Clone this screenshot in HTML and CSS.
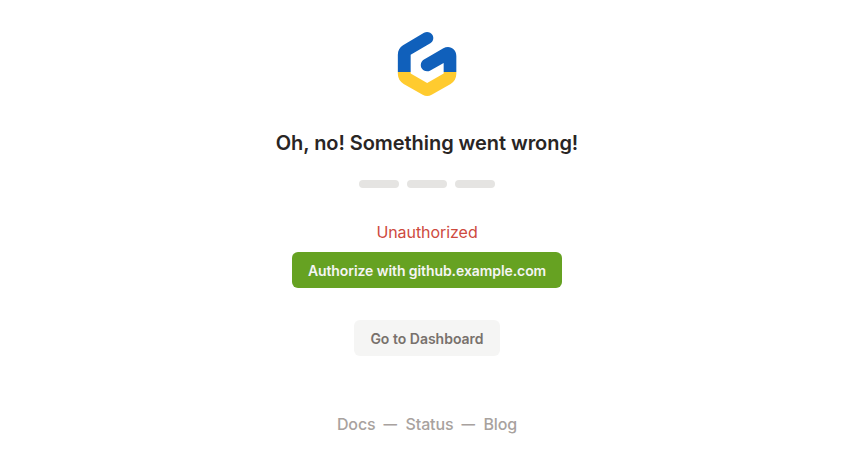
FILE: index.html
```html
<!DOCTYPE html>
<html lang="en">
<head>
<meta charset="utf-8">
<title>Oh, no! Something went wrong!</title>
<link rel="stylesheet" href="styles.css">
</head>
<body>
<main class="page">
  <svg class="logo" viewBox="0 0 240 240" aria-hidden="true">
    <defs>
      <linearGradient id="flag" gradientUnits="userSpaceOnUse" x1="0" y1="0" x2="0" y2="240">
        <stop offset="0.6" stop-color="#1060bb"/>
        <stop offset="0.6" stop-color="#ffcb2f"/>
      </linearGradient>
    </defs>
    <path fill="url(#flag)" d="M111 26.5C120 21.500 131 24.500 136.500 33C141.500 42 138.500 53 130 58L71 92V148.500L120.500 177L170 148.500V117L130 139.500C121 144.500 109 142 104 133C99 124 101.500 112 111 106.500L169 73C187 62.500 208 74 208 96V149C208 162 202 173 191 180L134 212.500C125 217.500 116 217.500 107 212.500L50 180C39 173 32.500 162 32.500 149V92C32.500 80 38 70 48 64Z"/>
  </svg>
  <h1 class="title">Oh, no! Something went wrong!</h1>
  <div class="bars"><span></span><span></span><span></span></div>
  <p class="error">Unauthorized</p>
  <button class="button primary">Authorize with github.example.com</button>
  <button class="button secondary">Go to Dashboard</button>
  <footer class="links"><span>Docs</span><span class="dash">—</span><span>Status</span><span class="dash">—</span><span>Blog</span></footer>
</main>
</body>
</html>
```
FILE: styles.css
```css
* { box-sizing: border-box; }
body {
  margin: 0;
  background: #fff;
  font-family: Inter, "Liberation Sans", sans-serif;
}
.page {
  display: flex;
  flex-direction: column;
  align-items: center;
  height: 463px;
  padding: 24px 0 0 4px;
}
.logo { width: 80px; height: 80px; flex: none; }
.title {
  margin: 25px 0 0;
  font-size: 20px;
  line-height: 28px;
  font-weight: 600;
  letter-spacing: -0.06px;
  color: #292524;
}
.bars { display: flex; gap: 8px; margin-top: 23px; }
.bars span { width: 40px; height: 8px; border-radius: 4px; background: #e5e4e2; }
.error {
  margin: 32px 0 0;
  font-size: 16px;
  line-height: 24px;
  letter-spacing: -0.06px;
  color: #ce4a3e;
}
.button {
  height: 36px;
  padding: 2px 0 0;
  border: 0;
  border-radius: 6px;
  font: 600 14px/20px Inter, "Liberation Sans", sans-serif;
}
.primary { width: 270px; margin-top: 8px; background: #66a222; color: #f5f5f4; letter-spacing: -0.08px; }
.secondary { width: 146px; margin-top: 32px; background: #f5f5f4; color: #78716c; }
.links {
  display: flex;
  gap: 8px;
  margin-top: 56px;
  font-size: 16px;
  line-height: 24px;
  font-weight: 500;
  letter-spacing: -0.12px;
  color: #a8a29e;
}
.dash { width: 14px; font-size: 13.5px; font-weight: 700; }
```
